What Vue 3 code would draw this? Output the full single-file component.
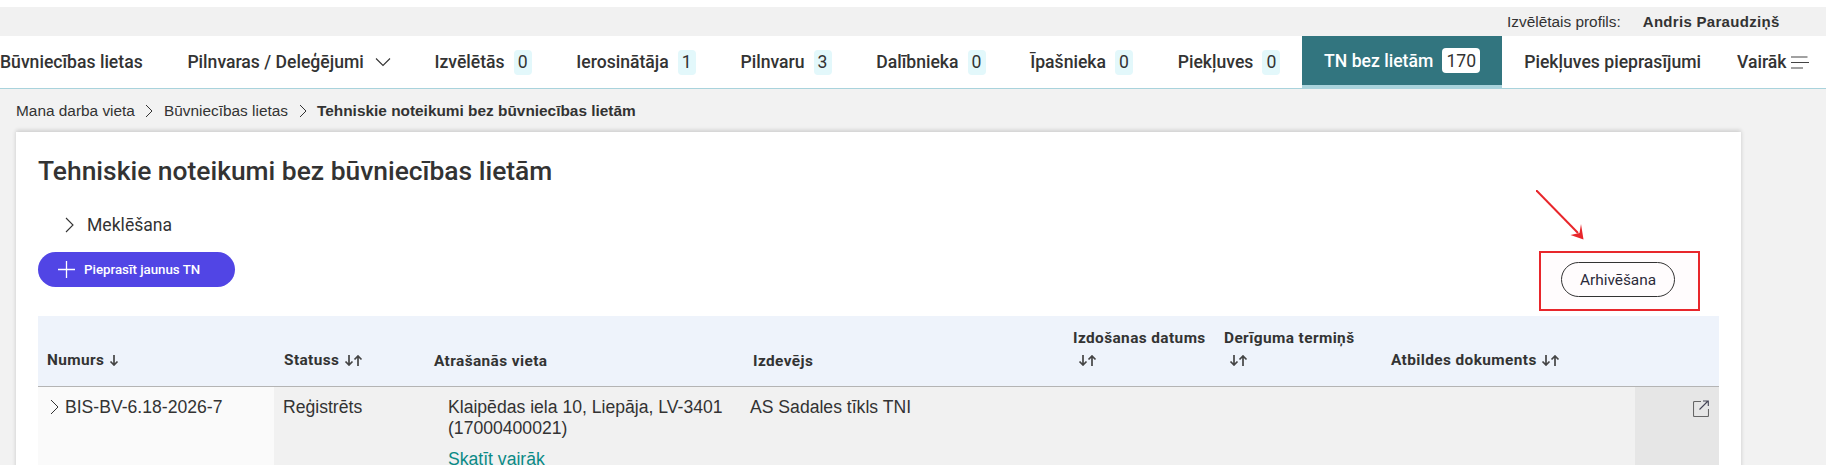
<script setup>
const tabs = [
  { label: 'Izvēlētās', count: 0 },
  { label: 'Ierosinātāja', count: 1 },
  { label: 'Pilnvaru', count: 3 },
  { label: 'Dalībnieka', count: 0 },
  { label: 'Īpašnieka', count: 0 },
  { label: 'Piekļuves', count: 0 },
]
</script>

<template>
  <div class="page">
    <div class="profile-bar">
      <span class="profile-label">Izvēlētais profils:</span>
      <strong class="profile-name">Andris Paraudziņš</strong>
    </div>

    <nav class="nav">
      <a class="nav-item">Būvniecības lietas</a>
      <a class="nav-item drop">
        Pilnvaras / Deleģējumi
        <svg class="drop-icon" width="16" height="16" viewBox="0 0 16 16" fill="none" stroke="currentColor" stroke-width="1.1"><path d="M1 4.500 8 11.500 15 4.500" /></svg>
      </a>
      <a v-for="t in tabs" :key="t.label" class="nav-item">
        {{ t.label }}<span class="badge">{{ t.count }}</span>
      </a>
      <a class="nav-item active">TN bez lietām<span class="badge">170</span></a>
      <a class="nav-item plain">Piekļuves pieprasījumi</a>
      <a class="nav-item more">
        Vairāk
        <svg width="18" height="13" viewBox="0 0 18 13" fill="none" stroke="#444" stroke-width="1.1"><path d="M0 1H16.500M0 6.500H18M0 12H12" /></svg>
      </a>
    </nav>

    <div class="crumbs">
      <span>Mana darba vieta</span>
      <svg width="8" height="14" viewBox="0 0 8 14" fill="none" stroke="#333" stroke-width="1"><path d="M1 1 7 7 1 13" /></svg>
      <span>Būvniecības lietas</span>
      <svg width="8" height="14" viewBox="0 0 8 14" fill="none" stroke="#333" stroke-width="1"><path d="M1 1 7 7 1 13" /></svg>
      <strong>Tehniskie noteikumi bez būvniecības lietām</strong>
    </div>

    <main class="card">
      <h1 class="title">Tehniskie noteikumi bez būvniecības lietām</h1>

      <div class="search">
        <svg width="9" height="16" viewBox="0 0 9 16" fill="none" stroke="#333" stroke-width="1.1"><path d="M1 1 8 8 1 15" /></svg>
        <span>Meklēšana</span>
      </div>

      <div class="actions">
        <button class="btn-primary">
          <svg width="17" height="17" viewBox="0 0 17 17" fill="none" stroke="#fff" stroke-width="1.3"><path d="M8.500 0V17M0 8.500H17" /></svg>
          Pieprasīt jaunus TN
        </button>
        <div class="highlight">
          <button class="btn-outline">Arhivēšana</button>
          <svg class="arrow" width="60" height="60" viewBox="0 0 60 60" fill="none">
            <path d="M0 0 42 43" stroke="#e8262b" stroke-width="2" />
            <path d="M47.500 49.500 34.500 45 43.500 43 45 34Z" fill="#e8262b" />
          </svg>
        </div>
      </div>

      <table class="table">
        <colgroup>
          <col class="c1" /><col class="c2" /><col class="c3" /><col class="c4" />
          <col class="c5" /><col class="c6" /><col class="c7" /><col class="c8" />
        </colgroup>
        <thead>
          <tr>
            <th class="pad-1">Numurs <svg class="sort" width="10" height="11" viewBox="0 0 10 11" fill="none" stroke="#444" stroke-width="1.700"><path d="M5 0V10M1.500 6.500 5 10 8.500 6.500" /></svg></th>
            <th class="pad-2">Statuss <svg class="sort" width="19" height="11" viewBox="0 0 19 11" fill="none" stroke="#444" stroke-width="1.700"><path d="M5 0V10M1.500 6.500 5 10 8.500 6.500M14 11V1M10.500 4.500 14 1 17.500 4.500" /></svg></th>
            <th class="pad-3 low">Atrašanās vieta</th>
            <th class="pad-4 low">Izdevējs</th>
            <th class="pad-5">Izdošanas datums<br /><svg class="sort under" width="19" height="11" viewBox="0 0 19 11" fill="none" stroke="#444" stroke-width="1.700"><path d="M5 0V10M1.500 6.500 5 10 8.500 6.500M14 11V1M10.500 4.500 14 1 17.500 4.500" /></svg></th>
            <th class="pad-5">Derīguma termiņš<br /><svg class="sort under" width="19" height="11" viewBox="0 0 19 11" fill="none" stroke="#444" stroke-width="1.700"><path d="M5 0V10M1.500 6.500 5 10 8.500 6.500M14 11V1M10.500 4.500 14 1 17.500 4.500" /></svg></th>
            <th class="pad-7">Atbildes dokuments <svg class="sort" width="19" height="11" viewBox="0 0 19 11" fill="none" stroke="#444" stroke-width="1.700"><path d="M5 0V10M1.500 6.500 5 10 8.500 6.500M14 11V1M10.500 4.500 14 1 17.500 4.500" /></svg></th>
            <th></th>
          </tr>
        </thead>
        <tbody>
          <tr>
            <td class="first">
              <div class="num">
                <svg width="9" height="16" viewBox="0 0 9 16" fill="none" stroke="#333" stroke-width="1"><path d="M1 1 8 8 1 15" /></svg>
                <span>BIS-BV-6.18-2026-7</span>
              </div>
            </td>
            <td class="status">Reģistrēts</td>
            <td class="place">
              Klaipēdas iela 10, Liepāja, LV-3401 (17000400021)
              <a class="link">Skatīt vairāk</a>
            </td>
            <td class="issuer">AS Sadales tīkls TNI</td>
            <td></td>
            <td></td>
            <td></td>
            <td class="open">
              <svg width="16" height="17" viewBox="0 0 16 17" fill="none" stroke="#666" stroke-width="1.1"><path d="M8 1.500H1.500Q.5 1.500 .5 2.500V15.500Q.5 16.500 1.500 16.500H14.500Q15.500 16.500 15.500 15.500V9" /><path d="M15 1 6.500 9.500M10 1H15.300V6" stroke="#445" /></svg>
            </td>
          </tr>
        </tbody>
      </table>
    </main>
  </div>
</template>

<style scoped>
.page {
  padding-top: 7px;
  height: 458px;
  overflow: hidden;
  background: #f2f2f2;
  background-clip: content-box;
  color: #333;
  font-family: Roboto, sans-serif;
}
.profile-bar {
  height: 29px;
  display: flex;
  align-items: center;
  padding-left: 1507px;
  font-family: "Liberation Sans", sans-serif;
  font-size: 15.4px;
  background: #f1f1f1;
  white-space: nowrap;
}
.profile-name {
  margin-left: 22px;
  font-size: 15px;
  letter-spacing: .3px;
}
.nav {
  height: 52px;
  display: flex;
  align-items: stretch;
  background: #fff;
  border-bottom: 1px solid #a9d3dc;
  font-size: 17.6px;
  font-weight: 500;
  box-sizing: content-box;
}
.nav-item {
  display: flex;
  align-items: center;
  margin-right: 44.700px;
  white-space: nowrap;
}
.drop-icon { margin-left: 11px; margin-right: -1px; }
.badge {
  margin-left: 9px;
  min-width: 18px;
  height: 25px;
  padding: 0 1px;
  box-sizing: border-box;
  display: inline-flex;
  align-items: center;
  justify-content: center;
  border-radius: 4px;
  background: #e3f8fb;
  font-weight: 400;
}
.active {
  margin-right: 22px;
  margin-left: -23px;
  padding: 0 22px;
  background: #32757f;
  color: #fff;
  border-bottom: 4px solid #a9d3dc;
  margin-bottom: -1px;
  height: 53px;
  box-sizing: border-box;
}
.active .badge {
  background: #fff;
  color: #333;
  width: 38px;
  margin-left: 9px;
}
.plain { margin-right: 36px; }
.more { margin-right: 0; gap: 4px; }
.crumbs {
  height: 43px;
  padding-left: 16px;
  display: flex;
  align-items: center;
  gap: 10.500px;
  font-family: "Liberation Sans", sans-serif;
  font-size: 15.4px;
  white-space: nowrap;
}
.card {
  margin: 0 85px 0 16px;
  height: 340px;
  padding-left: 22px;
  background: #fff;
  box-shadow: 0 -2px 4px rgba(0, 0, 0, .12), 0 0 6px rgba(0, 0, 0, .05);
}
.title {
  margin: 0;
  padding: 23px 0 0 0;
  font-size: 26.400px;
  line-height: 32px;
  font-weight: 500;
}
.search {
  margin-top: 28px;
  padding-left: 27px;
  height: 20px;
  display: flex;
  align-items: center;
  gap: 13px;
  font-size: 17.6px;
}
.actions {
  margin-top: 17px;
  height: 64px;
  display: flex;
  justify-content: space-between;
  align-items: flex-start;
}
.btn-primary {
  height: 35px;
  width: 197px;
  display: flex;
  align-items: center;
  gap: 9px;
  padding: 0 0 0 20px;
  border: 0;
  border-radius: 18px;
  background: #5145e5;
  color: #fff;
  font-family: Roboto, sans-serif;
  font-size: 13.300px;
  font-weight: 500;
}
.highlight {
  position: relative;
  width: 161px;
  height: 60px;
  margin: -1px 41px 0 0;
  box-sizing: border-box;
  border: 2px solid #e8262b;
  background: #fffcfd;
  display: flex;
  align-items: center;
  justify-content: center;
}
.btn-outline {
  width: 114px;
  height: 35px;
  margin: -3px 3px 0 0;
  border: 1px solid #333;
  border-radius: 18px;
  background: transparent;
  color: #2a2a3a;
  font-family: Roboto, sans-serif;
  font-size: 15.4px;
  font-weight: 400;
}
.arrow {
  position: absolute;
  left: -5px;
  top: -63px;
}
.table {
  width: 1681px;
  table-layout: fixed;
  border-collapse: collapse;
}
.c1 { width: 236px; }
.c2 { width: 146px; }
.c3 { width: 320px; }
.c4 { width: 329px; }
.c5 { width: 151px; }
.c6 { width: 171px; }
.c7 { width: 244px; }
.c8 { width: 84px; }
th {
  height: 70px;
  box-sizing: border-box;
  padding: 0 0 15px 0;
  background: #eef3fb;
  border-bottom: 1px solid #b4b4b4;
  text-align: left;
  vertical-align: bottom;
  font-size: 15.4px;
  line-height: 22px;
  font-weight: 700;
  letter-spacing: .4px;
  white-space: nowrap;
}
.low { padding-bottom: 14px; }
.pad-1 { padding-left: 9px; }
.pad-2 { padding-left: 10px; }
.pad-3 { padding-left: 14px; }
.pad-4 { padding-left: 13px; }
.pad-5 { padding-left: 4px; }
.pad-7 { padding-left: 0; }
.sort { vertical-align: -1px; }
.under { margin-left: 5px; }
td {
  height: 80px;
  padding: 0;
  vertical-align: top;
  background: #f1f1f1;
  font-family: "Liberation Sans", sans-serif;
  font-size: 17.6px;
  line-height: 21px;
}
td.first { background: #fafafa; }
.num {
  display: flex;
  align-items: center;
  gap: 4px;
  padding: 10px 0 0 12px;
}
.num svg { margin-right: 2px; }
.status { padding: 10px 0 0 9px; }
.place { padding: 10px 8px 0 28px; }
.link {
  display: block;
  margin-top: 10px;
  color: #0b8a86;
}
.issuer { padding: 10px 0 0 10px; }
td.open {
  background: #e6e6e6;
  padding: 13px 0 0 58px;
}
</style>

<style>
html, body { margin: 0; overflow: hidden; background: #fff; }
</style>
